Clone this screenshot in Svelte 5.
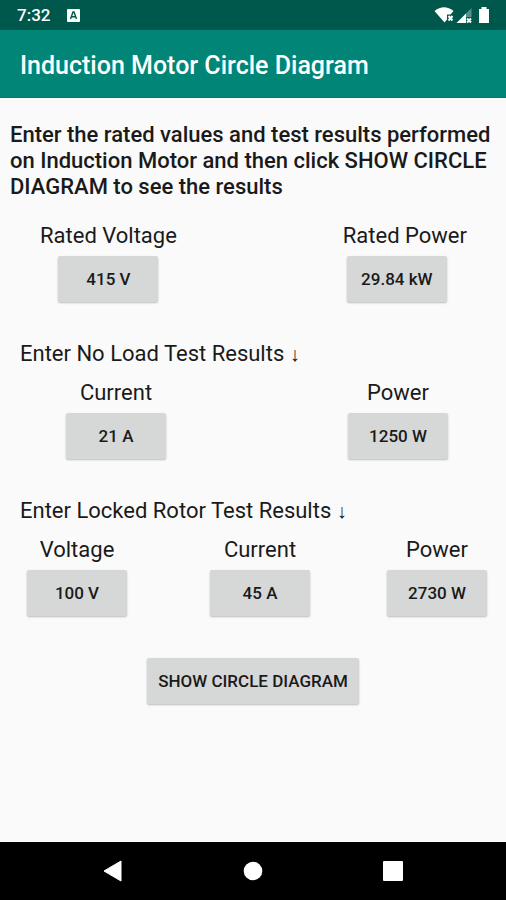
<script lang="ts">
type Field = { id: string; label: string; value: number; unit: string };

const rated: Field[] = [
    { id: 'rated-voltage', label: 'Rated Voltage', value: 415, unit: 'V' },
    { id: 'rated-power', label: 'Rated Power', value: 29.84, unit: 'kW' },
];

const noLoad: Field[] = [
    { id: 'no-load-current', label: 'Current', value: 21, unit: 'A' },
    { id: 'no-load-power', label: 'Power', value: 1250, unit: 'W' },
];

const lockedRotor: Field[] = [
    { id: 'locked-voltage', label: 'Voltage', value: 100, unit: 'V' },
    { id: 'locked-current', label: 'Current', value: 45, unit: 'A' },
    { id: 'locked-power', label: 'Power', value: 2730, unit: 'W' },
];
</script>

{#snippet field(f: Field)}
    <div class="field">
        <label for={f.id}>{f.label}</label>
        <button class="btn value" id={f.id}>{f.value} {f.unit}</button>
    </div>
{/snippet}

<div class="screen">
    <div class="status">
        <span class="time">7:32</span>
        <svg class="note" width="13" height="13" viewBox="0 0 13 13">
            <rect width="13" height="13" rx="1" fill="#fff" />
            <path d="M3.5 10 L6 3 H7 L9.5 10 M4.7 7.8 H8.3" fill="none" stroke="#00574b" stroke-width="1.4" />
        </svg>
        <svg width="60" height="20" viewBox="0 0 60 20">
            <!-- wifi -->
            <path d="M0.5 6 Q10 -1.5 19.5 6 L16.5 9.5 H13 V14.5 L10.5 17.5 Z" fill="#fff" />
            <path d="M14.5 11 L18.5 15.5 M18.5 11 L14.5 15.5" stroke="#fff" stroke-width="2" />
            <!-- mobile signal -->
            <path d="M37.5 3 V12 H31.5 V9 Z" fill="#fff" opacity="0.35" />
            <path d="M22.5 18 L32 8.5 V18 Z" fill="#fff" />
            <path d="M33 13.5 L37 17.5 M37 13.5 L33 17.5" stroke="#fff" stroke-width="2" />
            <!-- battery -->
            <path d="M47.5 2 H52.5 V4 H55 V18 H45 V4 H47.5 Z" fill="#fff" />
        </svg>
    </div>

    <header>
        <h1>Induction Motor Circle Diagram</h1>
    </header>

    <main>
        <p class="intro">
            Enter the rated values and test results performed on Induction Motor
            and then click SHOW CIRCLE DIAGRAM to see the results
        </p>

        <div class="row rated">
            {#each rated as f}{@render field(f)}{/each}
        </div>

        <h2>Enter No Load Test Results <span class="arrow">↓</span></h2>
        <div class="row no-load">
            {#each noLoad as f}{@render field(f)}{/each}
        </div>

        <h2>Enter Locked Rotor Test Results <span class="arrow">↓</span></h2>
        <div class="row locked">
            {#each lockedRotor as f}{@render field(f)}{/each}
        </div>

        <button class="btn show">SHOW CIRCLE DIAGRAM</button>
    </main>

    <nav>
        <button aria-label="Back">
            <svg width="20" height="22" viewBox="0 0 20 22"><path d="M1 11 L18 1 V21 Z" fill="#fff" stroke="#fff" stroke-linejoin="round" /></svg>
        </button>
        <button aria-label="Home">
            <svg width="20" height="20" viewBox="0 0 20 20"><circle cx="10" cy="10" r="9.3" fill="#fff" /></svg>
        </button>
        <button aria-label="Recent apps">
            <svg width="20" height="20" viewBox="0 0 20 20"><rect width="20" height="20" rx="1" fill="#fff" /></svg>
        </button>
    </nav>
</div>

<style>
:global(body) {
    margin: 0;
}

.screen {
    display: flex;
    flex-direction: column;
    min-height: 100vh;
    background: #fafafa;
    color: #1a1a1a;
    font-family: Roboto, sans-serif;
}

.status {
    display: flex;
    align-items: center;
    height: 30px;
    padding: 0 12px 0 17px;
    background: #00574b;
    color: #fff;
}

.time {
    font-size: 17px;
    font-weight: 500;
}

.note {
    margin-left: 17px;
    margin-right: auto;
}

header {
    display: flex;
    align-items: center;
    height: 68px;
    padding: 4px 20px 0;
    box-sizing: border-box;
    background: #008577;
    border-bottom: 1px solid #00796c;
    color: #fff;
}

h1 {
    margin: 0;
    font-size: 25px;
    font-weight: 500;
}

main {
    flex: 1;
    display: flex;
    flex-direction: column;
    padding: 24px 0;
}

.intro {
    margin: 0 10px 23px;
    font-size: 22px;
    font-weight: 500;
    line-height: 26px;
}

h2 {
    margin: 39px 20px 13px;
    font-size: 22px;
    font-weight: 400;
    line-height: 26px;
}

.arrow {
    font-size: 20px;
}

.row {
    display: flex;
    justify-content: space-between;
}

.field {
    display: flex;
    flex-direction: column;
    align-items: center;
    gap: 7px;
}

.field label {
    font-size: 22px;
    font-weight: 400;
    line-height: 26px;
}

.rated {
    padding: 0 39px 0 40px;
}

.rated .field:last-child {
    align-items: flex-start;
}

.rated .field:last-child .value {
    margin-left: 4px;
}

.no-load {
    padding: 0 58px 0 66px;
}

.locked {
    padding: 0 19px 0 27px;
}

.locked .field:nth-child(2) {
    padding-left: 6px;
}

.btn {
    height: 46px;
    padding: 0 11px;
    border: none;
    border-radius: 2px;
    background: #d6d7d7;
    box-shadow: 0 1px 2px rgba(0, 0, 0, 0.25);
    color: #1a1a1a;
    font-family: inherit;
    font-size: 17px;
    font-weight: 500;
}

.value {
    min-width: 100px;
}

.show {
    align-self: center;
    margin-top: 42px;
}

nav {
    display: flex;
    justify-content: center;
    gap: 80px;
    height: 58px;
    background: #000;
}

nav button {
    display: flex;
    align-items: center;
    justify-content: center;
    width: 60px;
    padding: 0;
    border: none;
    background: none;
}
</style>
